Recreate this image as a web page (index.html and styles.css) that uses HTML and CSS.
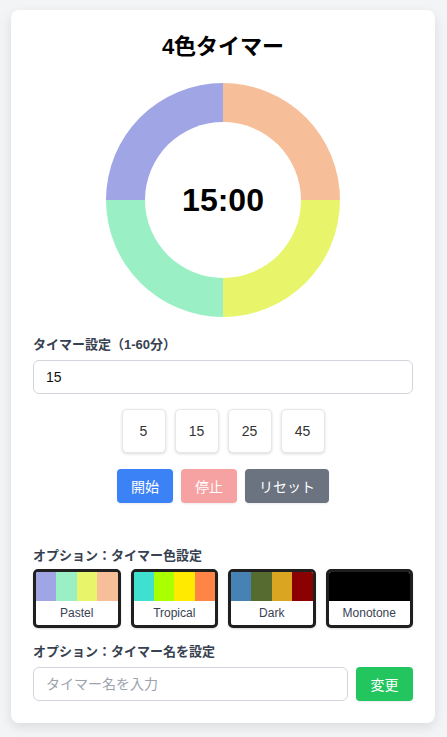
FILE: index.html
```html
<!DOCTYPE html>
<html lang="ja">
<head>
<meta charset="utf-8">
<title>4色タイマー</title>
<link rel="stylesheet" href="styles.css">
</head>
<body>
<div class="card">
  <h1 class="title">4色タイマー</h1>
  <div class="donut">
    <div class="donut-hole"><span class="time">15:00</span></div>
  </div>
  <label class="label label-first">タイマー設定（1-60分）</label>
  <input class="field" type="text" value="15">
  <div class="presets">
    <button class="preset">5</button>
    <button class="preset">15</button>
    <button class="preset">25</button>
    <button class="preset">45</button>
  </div>
  <div class="actions">
    <button class="btn btn-start">開始</button>
    <button class="btn btn-stop">停止</button>
    <button class="btn btn-reset">リセット</button>
  </div>
  <div class="label label-options">オプション：タイマー色設定</div>
  <div class="palettes">
    <div class="palette">
      <div class="swatches">
        <span class="sw" style="background:#a0a5e6"></span>
        <span class="sw" style="background:#9af0c4"></span>
        <span class="sw" style="background:#e8f56a"></span>
        <span class="sw" style="background:#f7bf99"></span>
      </div>
      <div class="pname">Pastel</div>
    </div>
    <div class="palette">
      <div class="swatches">
        <span class="sw" style="background:#40e0d0"></span>
        <span class="sw" style="background:#aaff00"></span>
        <span class="sw" style="background:#ffea00"></span>
        <span class="sw" style="background:#ff8547"></span>
      </div>
      <div class="pname">Tropical</div>
    </div>
    <div class="palette">
      <div class="swatches">
        <span class="sw" style="background:#4682b4"></span>
        <span class="sw" style="background:#556b2f"></span>
        <span class="sw" style="background:#daa520"></span>
        <span class="sw" style="background:#8b0000"></span>
      </div>
      <div class="pname">Dark</div>
    </div>
    <div class="palette">
      <div class="swatches">
        <span class="sw" style="background:#000000"></span>
        <span class="sw" style="background:#000000"></span>
        <span class="sw" style="background:#000000"></span>
        <span class="sw" style="background:#000000"></span>
      </div>
      <div class="pname">Monotone</div>
    </div>
  </div>
  <div class="label label-name">オプション：タイマー名を設定</div>
  <div class="name-row">
    <input class="field name-field" type="text" placeholder="タイマー名を入力">
    <button class="btn btn-change">変更</button>
  </div>
</div>
</body>
</html>
```
FILE: styles.css
```css
* { box-sizing: border-box; }
body {
  margin: 0;
  background: #f3f4f6;
  font-family: "Liberation Sans", "Noto Sans CJK JP", sans-serif;
  color: #111;
}
.card {
  width: 424px;
  margin: 10px 12px 14px 11px;
  background: #fff;
  border-radius: 8px;
  box-shadow: 0 4px 12px rgba(0,0,0,0.10);
  padding: 22px;
  display: flex;
  flex-direction: column;
}
.title {
  margin: 0;
  font-size: 22px;
  line-height: 30px;
  font-weight: bold;
  text-align: center;
  color: #000;
}
.donut {
  width: 234px;
  height: 234px;
  margin: 21px auto 0;
  border-radius: 50%;
  background: conic-gradient(#f7bf99 0 25%, #e8f56a 0 50%, #9af0c4 0 75%, #a0a5e6 0 100%);
  display: flex;
  align-items: center;
  justify-content: center;
}
.donut-hole {
  width: 156px;
  height: 156px;
  border-radius: 50%;
  background: #fff;
  display: flex;
  align-items: center;
  justify-content: center;
}
.time {
  font-size: 32px;
  font-weight: bold;
  color: #000;
  line-height: 1;
}
.label {
  display: block;
  font-size: 13px;
  line-height: 20px;
  font-weight: bold;
  color: #374151;
}
.label-first { margin-top: 18px; }
.field {
  display: block;
  width: 100%;
  height: 34px;
  margin-top: 5px;
  border: 1px solid #d1d5db;
  border-radius: 6px;
  padding: 0 12px;
  font-family: "Liberation Sans", "Noto Sans CJK JP", sans-serif;
  font-size: 14px;
  color: #111;
  background: #fff;
  outline: none;
}
.field::placeholder { color: #9ca3af; }
.presets {
  display: flex;
  justify-content: center;
  gap: 9px;
  margin-top: 15px;
}
.preset {
  width: 44px;
  height: 44px;
  border: 1px solid #e5e7eb;
  border-radius: 5px;
  background: #fff;
  box-shadow: 0 1px 3px rgba(0,0,0,0.15);
  font-family: "Liberation Sans", "Noto Sans CJK JP", sans-serif;
  font-size: 14px;
  color: #333;
  padding: 0;
}
.actions {
  display: flex;
  justify-content: center;
  gap: 8px;
  margin-top: 16px;
}
.btn {
  height: 34px;
  padding: 0 14px;
  border: none;
  border-radius: 4px;
  color: #fff;
  font-family: "Liberation Sans", "Noto Sans CJK JP", sans-serif;
  font-size: 14px;
  box-shadow: 0 1px 2px rgba(0,0,0,0.08);
}
.btn-start { background: #3b82f6; }
.btn-stop { background: #f7a2a2; }
.btn-reset { background: #6b7280; }
.label-options { margin-top: 43px; }
.palettes {
  display: grid;
  grid-template-columns: repeat(4, 1fr);
  gap: 10px;
  margin-top: 3px;
}
.palette {
  border: 3px solid #1f1f1f;
  border-radius: 5px;
  overflow: hidden;
  background: #fff;
  box-shadow: 0 1px 2px rgba(0,0,0,0.15);
}
.swatches {
  display: flex;
  height: 29px;
}
.sw { flex: 1; }
.pname {
  height: 24px;
  line-height: 24px;
  text-align: center;
  font-size: 12px;
  color: #374151;
}
.label-name { margin-top: 14px; }
.name-row {
  display: flex;
  gap: 8px;
  margin-top: 5px;
}
.name-field {
  flex: 1;
  margin-top: 0;
}
.btn-change {
  background: #22c55e;
  width: 57px;
  padding: 0;
}
```
